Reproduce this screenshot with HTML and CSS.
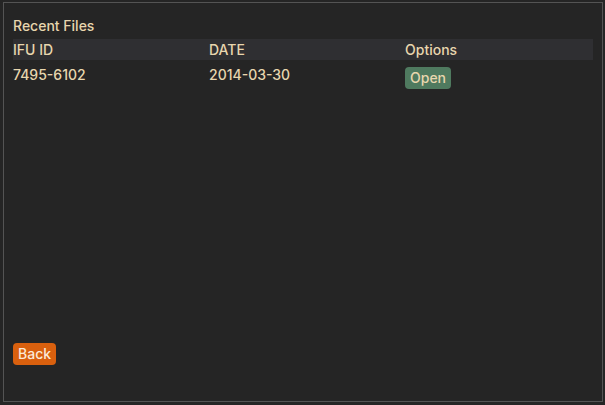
FILE: index.html
```html
<!DOCTYPE html>
<html>
<head>
<meta charset="utf-8">
<link rel="stylesheet" href="styles.css">
</head>
<body>
<div class="panel">
  <div class="title">Recent Files</div>
  <div class="table">
    <div class="row head">
      <div class="cell">IFU ID</div>
      <div class="cell">DATE</div>
      <div class="cell">Options</div>
    </div>
    <div class="row data">
      <div class="cell">7495-6102</div>
      <div class="cell">2014-03-30</div>
      <div class="cell"><button class="btn open">Open</button></div>
    </div>
  </div>
  <div class="footer">
    <button class="btn back">Back</button>
  </div>
</div>
</body>
</html>
```

FILE: styles.css
```css
html, body {
  margin: 0;
  padding: 0;
  background: #252525;
}
body {
  width: 605px;
  height: 405px;
  font-family: Inter, "Noto Sans", sans-serif;
  font-size: 14px;
  font-weight: 500;
  color: #e8d6ae;
}
.panel {
  box-sizing: border-box;
  width: 600px;
  height: 400px;
  margin: 2px 0 0 3px;
  border: 1px solid #545454;
  padding: 9px;
  display: flex;
  flex-direction: column;
  background: #252525;
}
.title {
  line-height: 17px;
  margin-top: 5px;
  height: 17px;
}
.table {
  margin-top: 5px;
}
.row {
  display: grid;
  grid-template-columns: 196px 196px 1fr;
}
.head {
  height: 21px;
  line-height: 21px;
  background: #2f2f32;
}
.data {
  padding-top: 6px;
  line-height: 17px;
}
.btn {
  font-family: inherit;
  font-size: 14px;
  font-weight: 500;
  border: none;
  border-radius: 4px;
  height: 22px;
  line-height: 22px;
  padding: 0 5px;
  cursor: pointer;
}
.open {
  background: #4f7a5f;
  color: #e8d6ae;
  margin-top: 1px;
}
.footer {
  margin-top: auto;
  margin-bottom: 27px;
}
.back {
  background: #d9600e;
  color: #fbe9d6;
}
```
